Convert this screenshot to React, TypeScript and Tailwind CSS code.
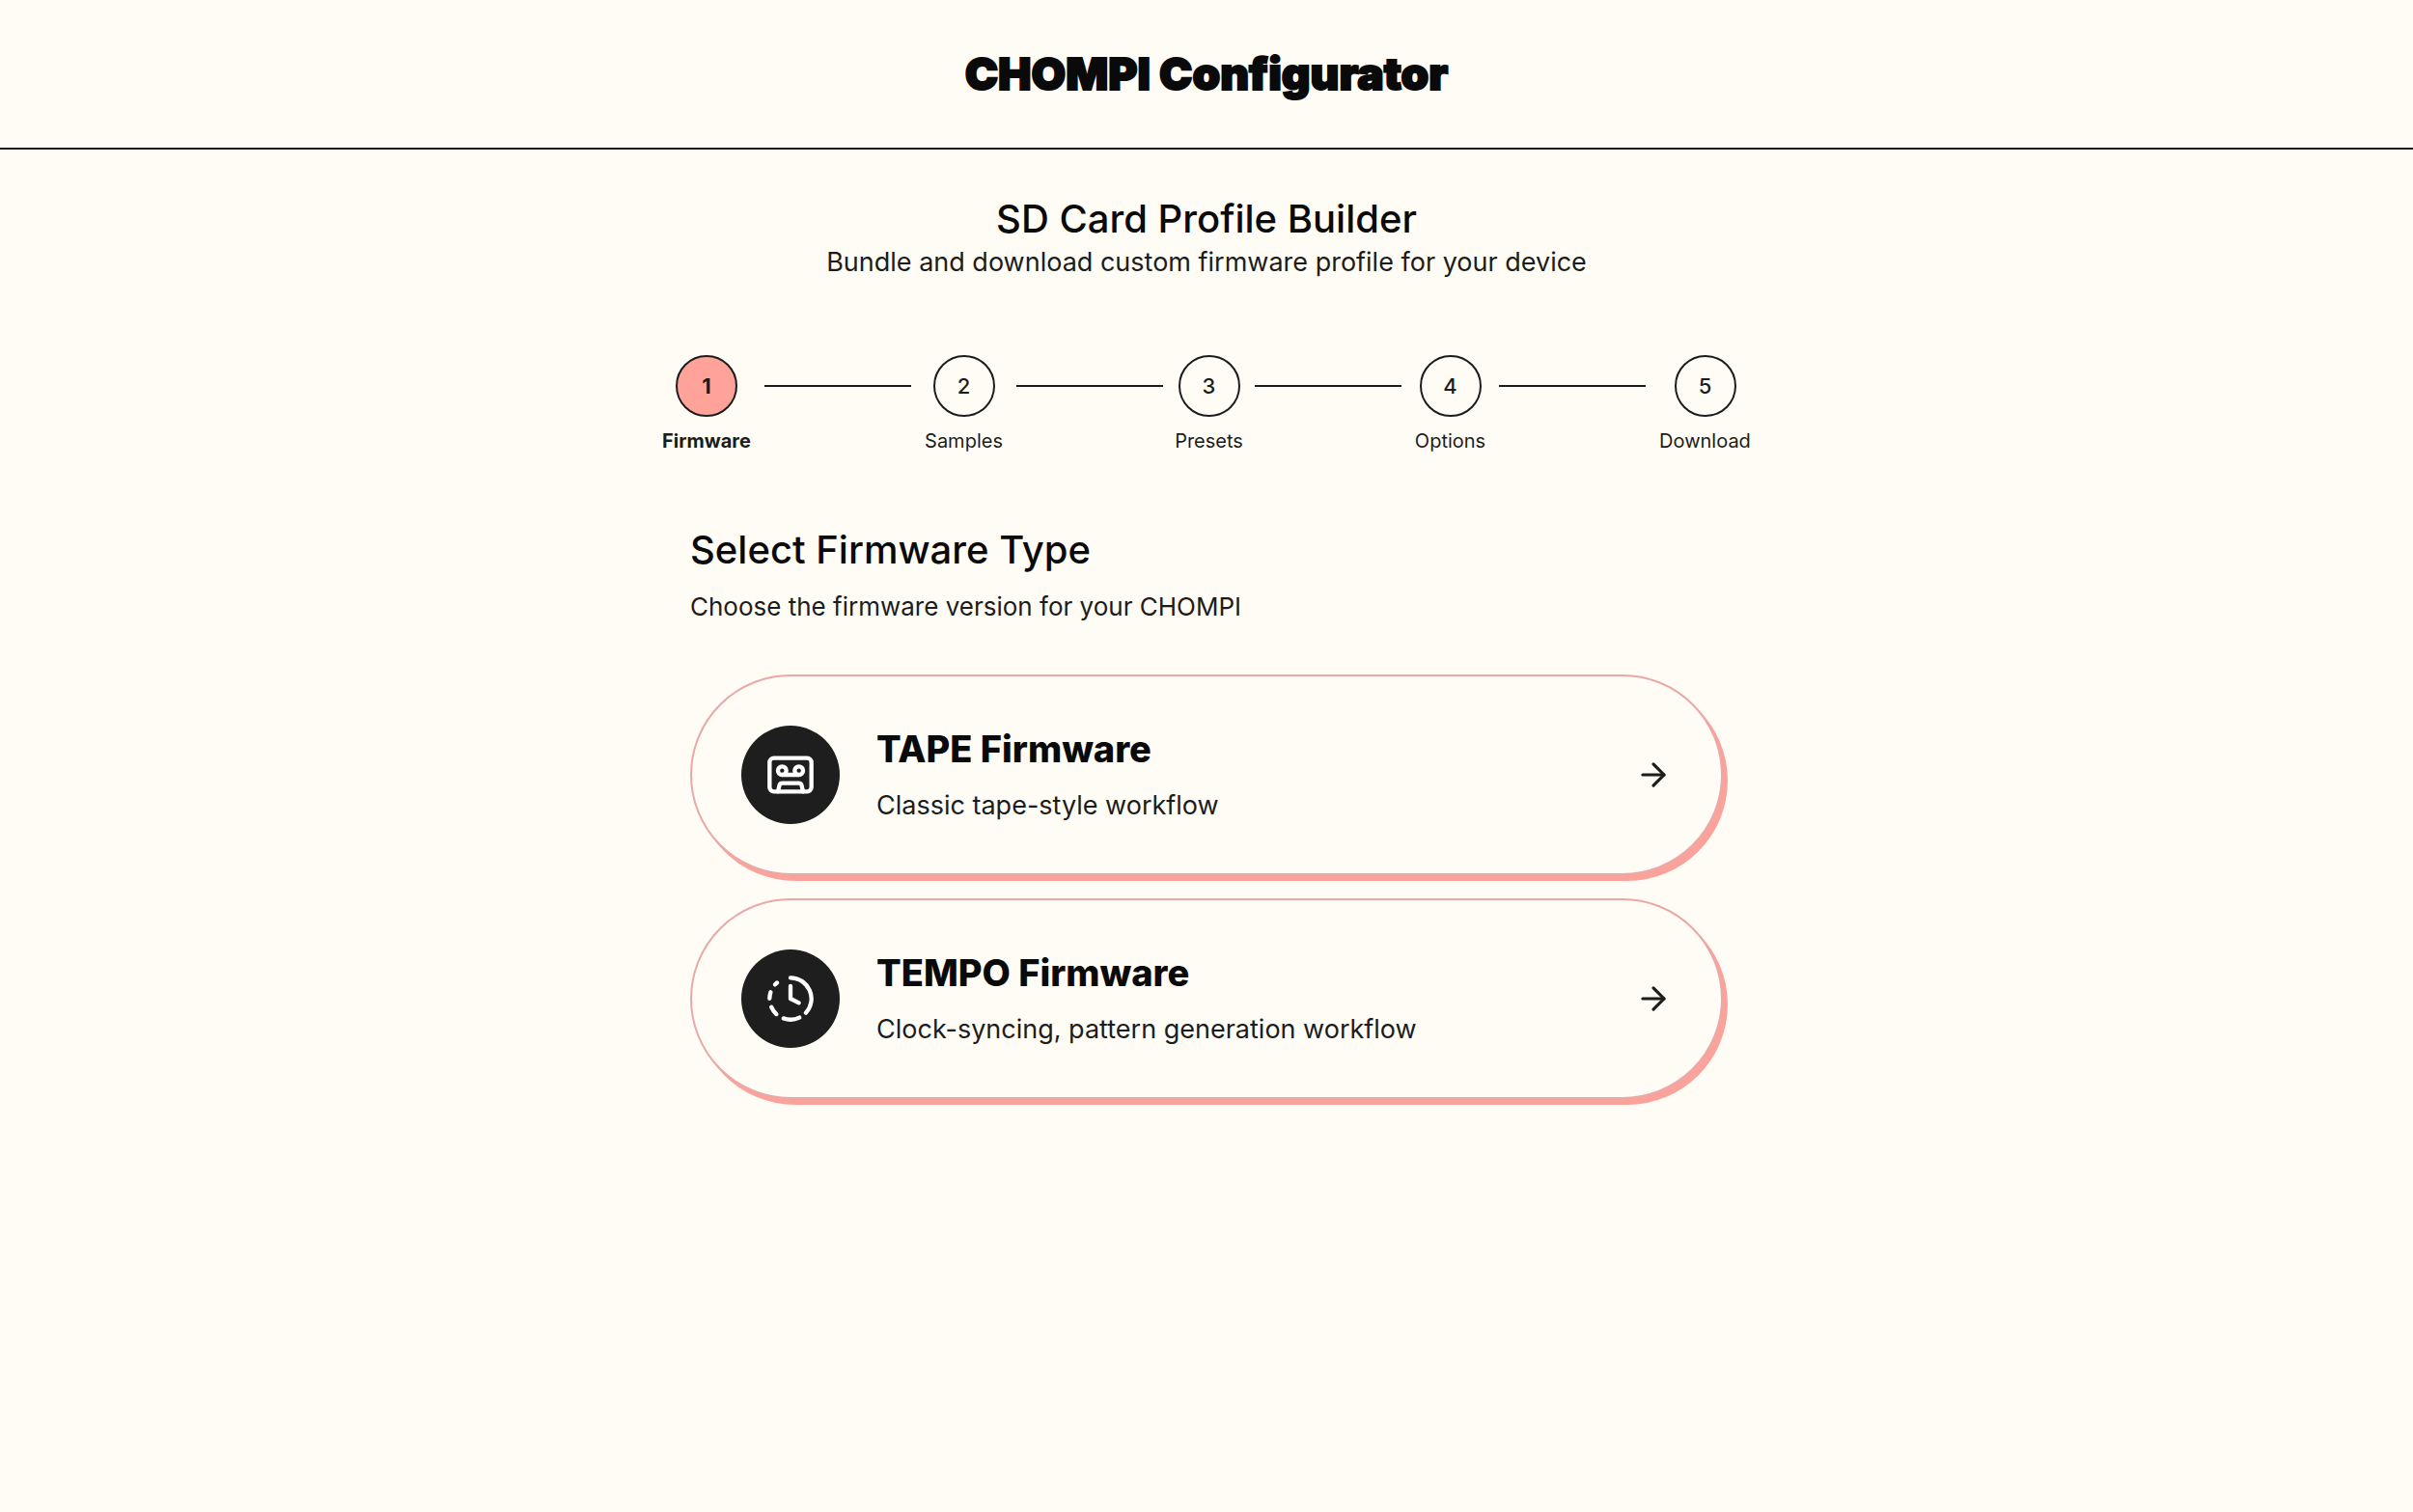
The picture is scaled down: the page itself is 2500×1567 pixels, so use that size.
import { ArrowRight, CassetteTape, ClockFading, type LucideIcon } from "lucide-react";

type Step = { name: string; width: string };

const steps: Step[] = [
  { name: "Firmware", width: "w-[94px]" },
  { name: "Samples", width: "w-[83px]" },
  { name: "Presets", width: "w-[69px]" },
  { name: "Options", width: "w-[75px]" },
  { name: "Download", width: "w-[97px]" },
];

function Stepper({ current }: { current: number }) {
  return (
    <ol className="mx-auto mt-[75px] flex max-w-full justify-center gap-[13px]">
      {steps.map((step, i) => {
        const active = i === current;
        return (
          <li key={step.name} className="flex gap-[13px]" aria-current={active ? "step" : undefined}>
            {i > 0 && <span className="mt-[31px] h-[2px] w-[152px] bg-[#1c1c1c]" />}
            <div className={`flex flex-col items-center ${step.width}`}>
              <span
                className={`flex size-16 items-center justify-center rounded-full border-2 border-[#1c1c1c] text-[22px] leading-8 ${
                  active ? "bg-[#ffa39a] font-bold" : "font-medium"
                }`}
              >
                {i + 1}
              </span>
              <span
                className={`mt-[11px] text-[20px] leading-7 whitespace-nowrap ${active ? "font-bold" : ""}`}
              >
                {step.name}
              </span>
            </div>
          </li>
        );
      })}
    </ol>
  );
}

function FirmwareCard({ icon: Icon, title, text }: { icon: LucideIcon; title: string; text: string }) {
  return (
    <button
      type="button"
      className="flex w-full cursor-pointer items-center gap-[38px] rounded-full border-2 border-[#e9a9a8] bg-[#fffcf5] p-[51px] text-left shadow-[5px_6px_0_0_#fba39b]"
    >
      <span className="flex size-[102px] shrink-0 items-center justify-center rounded-full bg-[#1e1e1e] text-white">
        <Icon size={52} strokeWidth={2} />
      </span>
      <span className="flex flex-1 flex-col gap-4">
        <span className="text-[38px] leading-[48px] font-extrabold text-[#0a0a0a]">{title}</span>
        <span className="text-[27px] leading-[38px]">{text}</span>
      </span>
      <ArrowRight size={38} strokeWidth={2} />
    </button>
  );
}

export default function App() {
  return (
    <div className="min-h-screen bg-[#fffcf5] font-['Inter',sans-serif] text-[#1c1c1c]">
      <header className="flex justify-center border-b-2 border-[#1c1c1c] py-[44px]">
        <h1 className="text-[46px] leading-[65px] font-black text-[#0a0a0a] [-webkit-text-stroke:2px_#0a0a0a]">
          CHOMPI Configurator
        </h1>
      </header>
      <main className="px-6 pt-[48px]">
        <div className="text-center">
          <h2 className="text-[40px] leading-[48px] font-medium text-[#0a0a0a]">SD Card Profile Builder</h2>
          <p className="text-[27px] leading-[42px]">Bundle and download custom firmware profile for your device</p>
        </div>
        <Stepper current={0} />
        <section className="mx-auto mt-[75px] max-w-[1070px]">
          <h3 className="text-[40px] leading-[48px] font-medium text-[#0a0a0a]">Select Firmware Type</h3>
          <p className="mt-[14px] text-[26px] leading-[42px]">Choose the firmware version for your CHOMPI</p>
          <div className="mt-[49px] flex flex-col gap-6">
            <FirmwareCard icon={CassetteTape} title="TAPE Firmware" text="Classic tape-style workflow" />
            <FirmwareCard
              icon={ClockFading}
              title="TEMPO Firmware"
              text="Clock-syncing, pattern generation workflow"
            />
          </div>
        </section>
      </main>
    </div>
  );
}
